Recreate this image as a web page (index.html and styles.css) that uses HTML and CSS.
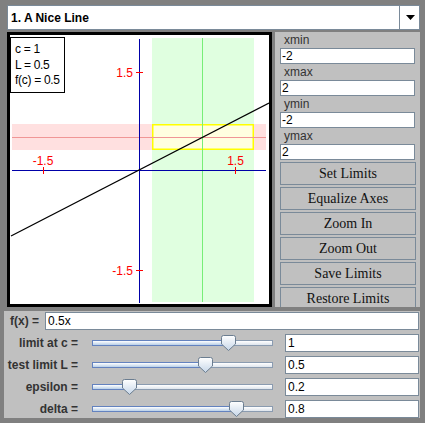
FILE: index.html
```html
<!DOCTYPE html>
<html>
<head>
<meta charset="utf-8">
<link rel="stylesheet" href="styles.css">
</head>
<body>
<svg class="defs" width="0" height="0">
  <defs>
    <linearGradient id="tg" x1="0" y1="0" x2="0" y2="1">
      <stop offset="0" stop-color="#ffffff"/>
      <stop offset="1" stop-color="#c6d6e8"/>
    </linearGradient>
  </defs>
</svg>
<div class="app">
  <div class="combo">
    <span class="combo-text">1. A Nice Line</span>
    <span class="combo-btn"><svg width="9" height="5" viewBox="0 0 9 5"><path d="M0 0H9L4.5 5Z" fill="#000"/></svg></span>
  </div>
  <div class="mid">
    <div class="canvas">
      <svg class="plot" width="259" height="269" viewBox="10 35 259 269">
        <rect x="152" y="38" width="102" height="264" fill="#e0ffe0"/>
        <rect x="12" y="124" width="254" height="26" fill="#ffe0e0"/>
        <rect x="152.75" y="124.75" width="100.5" height="24.5" fill="#ffffe0" stroke="#ffff00" stroke-width="1.5"/>
        <line x1="202.5" y1="38" x2="202.5" y2="302" stroke="#78ee78" stroke-width="1"/>
        <line x1="12" y1="137.5" x2="266" y2="137.5" stroke="#f09696" stroke-width="1"/>
        <line x1="139.5" y1="39" x2="139.5" y2="303" stroke="#0000a8" stroke-width="1"/>
        <line x1="12" y1="170.5" x2="266" y2="170.5" stroke="#0000a8" stroke-width="1"/>
        <line x1="136" y1="72.5" x2="143" y2="72.5" stroke="#ff0000"/>
        <line x1="136" y1="270.5" x2="143" y2="270.5" stroke="#ff0000"/>
        <line x1="43.5" y1="167" x2="43.5" y2="174" stroke="#ff0000"/>
        <line x1="235.5" y1="167" x2="235.5" y2="174" stroke="#ff0000"/>
        <text class="tick" x="133" y="77" text-anchor="end">1.5</text>
        <text class="tick" x="133" y="275" text-anchor="end">-1.5</text>
        <text class="tick" x="43" y="164.5" text-anchor="middle">-1.5</text>
        <text class="tick" x="235.5" y="164.5" text-anchor="middle">1.5</text>
        <line x1="11" y1="236" x2="269" y2="103" stroke="#000" stroke-width="1.3"/>
      </svg>
      <div class="info">
        <div>c = 1</div>
        <div>L = 0.5</div>
        <div>f(c) = 0.5</div>
      </div>
    </div>
    <div class="side">
      <div class="lbl">xmin</div>
      <input class="fld" value="-2">
      <div class="lbl">xmax</div>
      <input class="fld" value="2">
      <div class="lbl">ymin</div>
      <input class="fld" value="-2">
      <div class="lbl">ymax</div>
      <input class="fld" value="2">
      <button class="btn">Set Limits</button>
      <button class="btn">Equalize Axes</button>
      <button class="btn">Zoom In</button>
      <button class="btn">Zoom Out</button>
      <button class="btn">Save Limits</button>
      <button class="btn">Restore Limits</button>
    </div>
  </div>
  <div class="bottom">
    <div class="fx-row">
      <span class="fx-label">f(x) =</span>
      <input class="fx-field" value="0.5x">
    </div>
    <div class="srow">
      <span class="slabel">limit at c =</span>
      <div class="slider">
        <div class="track"><div class="fill" style="width:137px"></div></div>
        <svg class="thumb" style="left:141px" width="15" height="16" viewBox="0 0 15 16"><path d="M2.5 .5h10a2 2 0 0 1 2 2V9L7.5 15.5 .5 9V2.5a2 2 0 0 1 2-2z" fill="url(#tg)" stroke="#6b7d90"/></svg>
      </div>
      <input class="sfield" value="1">
    </div>
    <div class="srow">
      <span class="slabel">test limit L =</span>
      <div class="slider">
        <div class="track"><div class="fill" style="width:114px"></div></div>
        <svg class="thumb" style="left:118px" width="15" height="16" viewBox="0 0 15 16"><path d="M2.5 .5h10a2 2 0 0 1 2 2V9L7.5 15.5 .5 9V2.5a2 2 0 0 1 2-2z" fill="url(#tg)" stroke="#6b7d90"/></svg>
      </div>
      <input class="sfield" value="0.5">
    </div>
    <div class="srow">
      <span class="slabel">epsilon =</span>
      <div class="slider">
        <div class="track"><div class="fill" style="width:38px"></div></div>
        <svg class="thumb" style="left:42px" width="15" height="16" viewBox="0 0 15 16"><path d="M2.5 .5h10a2 2 0 0 1 2 2V9L7.5 15.5 .5 9V2.5a2 2 0 0 1 2-2z" fill="url(#tg)" stroke="#6b7d90"/></svg>
      </div>
      <input class="sfield" value="0.2">
    </div>
    <div class="srow">
      <span class="slabel">delta =</span>
      <div class="slider">
        <div class="track"><div class="fill" style="width:145px"></div></div>
        <svg class="thumb" style="left:149px" width="15" height="16" viewBox="0 0 15 16"><path d="M2.5 .5h10a2 2 0 0 1 2 2V9L7.5 15.5 .5 9V2.5a2 2 0 0 1 2-2z" fill="url(#tg)" stroke="#6b7d90"/></svg>
      </div>
      <input class="sfield" value="0.8">
    </div>
  </div>
</div>
</body>
</html>
```

FILE: styles.css
```css
* { box-sizing: border-box; }
body {
  margin: 0;
  font-family: "Liberation Sans", Arial, sans-serif;
  font-size: 12px;
  color: #000;
}
.defs { position: absolute; }
.app {
  width: 425px;
  height: 423px;
  background: #808080;
  padding: 5px 5px 5px 4px;
  display: flex;
  flex-direction: column;
}
.combo {
  height: 25px;
  margin-left: 3px;
  background: #fff;
  border: 1px solid #7a8a99;
  display: flex;
  align-items: center;
}
.combo-text {
  flex: 1;
  padding-left: 3px;
  font-weight: bold;
}
.combo-btn {
  width: 20px;
  height: 100%;
  border-left: 1px solid #7a8a99;
  display: flex;
  align-items: center;
  justify-content: center;
}
.combo-btn svg { display: block; margin-left: 1px; }
.mid {
  display: flex;
  gap: 3px;
  margin-top: 2px;
  height: 275px;
}
.canvas {
  position: relative;
  margin-left: 3px;
  width: 265px;
  height: 275px;
  border: 3px solid #000;
  background: #fff;
}
.plot { display: block; }
.tick {
  font-family: "Liberation Sans", Arial, sans-serif;
  font-size: 12px;
  fill: #ff0000;
}
.info {
  position: absolute;
  left: 0;
  top: 2px;
  width: 55px;
  height: 56px;
  border: 1.5px solid #000;
  background: #fff;
  padding: 4px 0 0 4px;
  line-height: 15.5px;
  letter-spacing: -0.3px;
  white-space: nowrap;
}
.side {
  width: 145px;
  background: #c0c0c0;
  padding: 0 4px 0 5px;
  overflow: hidden;
  display: flex;
  flex-direction: column;
}
.lbl {
  height: 16px;
  line-height: 16px;
  padding-left: 4px;
  color: #333;
  flex: none;
}
.fld {
  flex: none;
  height: 16px;
  width: 135px;
  margin: 0;
  border: 1px solid #7a8a99;
  background: #fff;
  font: 12px "Liberation Sans", Arial, sans-serif;
  color: #000;
  padding: 0 1px;
  outline: none;
}
.btn {
  flex: none;
  height: 23px;
  width: 136px;
  margin: 2px 0 0 0;
  padding: 0;
  background: #c0c0c0;
  border: 1px solid #7a8a99;
  font: 14px "Liberation Serif", "Times New Roman", serif;
  color: #111;
}
.bottom {
  margin-top: 4px;
  height: 107px;
  background: #c0c0c0;
  padding-top: 1px;
  display: flex;
  flex-direction: column;
  gap: 4px;
}
.fx-row {
  display: flex;
  align-items: center;
  height: 18px;
  padding-left: 6px;
}
.fx-label {
  width: 35px;
  font-weight: bold;
  color: #333;
}
.fx-field, .sfield {
  height: 18px;
  margin: 0 1px 0 0;
  border: 1px solid #7a8a99;
  background: #fff;
  font: 12px "Liberation Sans", Arial, sans-serif;
  color: #000;
  padding: 0 2px;
  outline: none;
}
.fx-field { flex: 1; }
.srow {
  display: grid;
  grid-template-columns: 76px 205px 134px;
  height: 18px;
  align-items: center;
}
.sfield { width: 134px; }
.slabel {
  text-align: right;
  padding-right: 2px;
  font-weight: bold;
  color: #333;
  white-space: nowrap;
}
.slider {
  position: relative;
  height: 18px;
  display: flex;
  align-items: center;
}
.track {
  margin: 0 12px;
  flex: 1;
  height: 6px;
  border: 1px solid #8a9bb0;
  background: linear-gradient(#ffffff, #dde4ec);
  display: flex;
}
.fill {
  height: 6px;
  margin: -1px 0 0 -1px;
  border: 1px solid #6382bf;
  background: linear-gradient(#ffffff, #b8cfe8);
}
.thumb {
  position: absolute;
  top: 1px;
  display: block;
}
```
